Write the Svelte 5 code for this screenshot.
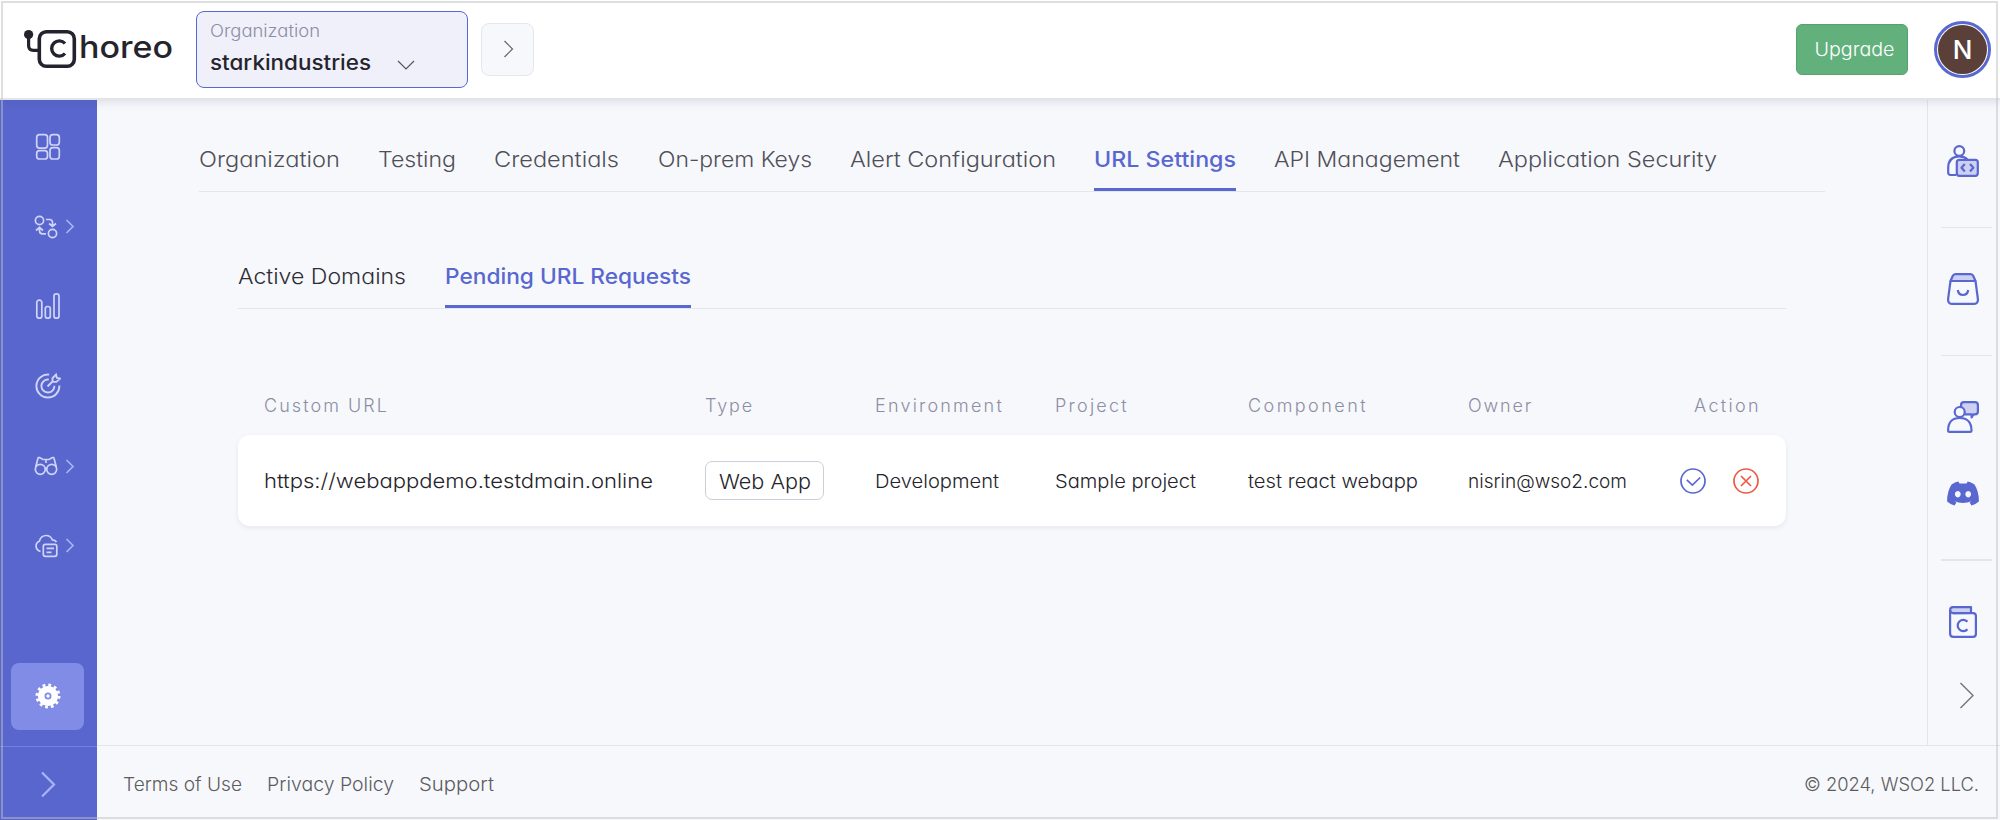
<script>
  // Widens a label's glyphs to its design width and reserves that width in the flow.
  function fit(node, width) {
    const natural = node.getBoundingClientRect().width;
    node.style.width = width + 'px';
    node.style.transform = `scaleX(${width / natural})`;
  }

  // Sets the tracking of a label so that it occupies its design width.
  function track(node, width) {
    const natural = node.getBoundingClientRect().width;
    node.style.letterSpacing = (width - natural) / node.textContent.length + 'px';
  }

  const tabs = [
    ['Organization', 141],
    ['Testing', 78],
    ['Credentials', 125],
    ['On-prem Keys', 154],
    ['Alert Configuration', 206],
    ['URL Settings', 142],
    ['API Management', 186],
    ['Application Security', 219]
  ];
  const subTabs = [
    ['Active Domains', 168],
    ['Pending URL Requests', 246]
  ];
  const headers = [
    ['Custom URL', 125],
    ['Type', 49],
    ['Environment', 129],
    ['Project', 74],
    ['Component', 120],
    ['Owner', 65],
    ['Action', 67]
  ];
  const links = [
    ['Terms of Use', 119],
    ['Privacy Policy', 127],
    ['Support', 75]
  ];
</script>

<div class="app">
  <header>
    <svg class="mark" width="54" height="42" viewBox="0 0 54 42" fill="none" stroke="#24222c">
      <circle cx="4.600" cy="6.500" r="4.600" fill="#24222c" stroke="none" />
      <path d="M4.600 8v9.500q0 4.800 4.800 4.800H15" stroke-width="3.200" />
      <rect x="15.300" y="3.700" width="35" height="34.500" rx="7" stroke-width="3.600" />
      <path d="M41 15.500A7.600 7.600 0 1 0 41 25.500" stroke-width="3.400" />
    </svg>
    <span class="word"><span use:fit={94}>horeo</span></span>
    <div class="org">
      <div class="label"><span use:fit={110}>Organization</span></div>
      <div class="value">
        <span use:fit={161}>starkindustries</span>
        <svg width="18" height="11" viewBox="0 0 18 11"><path d="M1 1l8 8 8-8" fill="none" stroke="#555560" stroke-width="1.200" /></svg>
      </div>
    </div>
    <button class="next" aria-label="Next">
      <svg width="11" height="18" viewBox="0 0 11 18"><path d="M1.500 1l8 8-8 8" fill="none" stroke="#62626c" stroke-width="1.200" /></svg>
    </button>
    <button class="upgrade"><span use:fit={80}>Upgrade</span></button>
    <div class="avatar"><div>N</div></div>
  </header>

  {#snippet chev()}
    <svg class="chev" width="10" height="15" viewBox="0 0 10 15"><path d="M1.500 1l6.500 6.500L1.500 14" fill="none" stroke="#a9b3f5" stroke-width="1.700" /></svg>
  {/snippet}

  <div class="body">
    <nav>
      <div class="item">
        <svg width="26" height="28" viewBox="0 0 26 28">
          <rect x="1.700" y="1.700" width="10.800" height="13.400" rx="2.800" />
          <rect x="15" y="1.700" width="9.300" height="10.300" rx="2.800" />
          <rect x="1.700" y="17.700" width="10.800" height="8.300" rx="2.800" />
          <rect x="15" y="14.700" width="9.300" height="11.300" rx="2.800" />
        </svg>
      </div>
      <div class="item more">
        <svg width="24" height="24" viewBox="0 0 24 24">
          <circle cx="5.500" cy="5.500" r="4.100" />
          <circle cx="18.500" cy="18.500" r="4.100" />
          <path d="M12 4.500h3.500q3 0 3 3V11M15 8.500l3.500 3 3.500-3M12 18.800H8.500q-3 0-3-3V13M2 15.500l3.500-3.200 3.500 3.200" />
        </svg>
        {@render chev()}
      </div>
      <div class="item">
        <svg width="26" height="28" viewBox="0 0 26 28">
          <rect x="1.800" y="8.200" width="5" height="18" rx="2.300" />
          <rect x="10.300" y="14.500" width="5" height="11.700" rx="2.300" />
          <rect x="19" y="1.900" width="5" height="24.300" rx="2.300" />
        </svg>
      </div>
      <div class="item">
        <svg width="26" height="26" viewBox="0 0 26 26" style:stroke-width="1.900">
          <path d="M14.200 1.600A11.500 11.500 0 1 0 24.400 12.500M13.800 6.600A6.500 6.500 0 1 0 19.400 12.800M12.500 13.500l6-6M17.500 8.500V5.200L21 1.600l.800 3.200 3.300.8-3.700 3.300h-3.300z" />
        </svg>
      </div>
      <div class="item more">
        <svg width="24" height="20" viewBox="0 0 24 20">
          <circle cx="6.300" cy="13.300" r="5" />
          <circle cx="17.700" cy="13.300" r="5" />
          <path d="M1.700 11L4 2.300Q4.300 1.200 5.500 1.600L9 3.500h6l3.500-1.900Q19.700 1.200 20 2.300L22.300 11M12 3.500V7M11 13q1-1.400 2 0" />
        </svg>
        {@render chev()}
      </div>
      <div class="item more">
        <svg width="24" height="24" viewBox="0 0 24 24">
          <path d="M6.500 17.300A5.300 5.300 0 0 1 5.300 7.200Q7 1.500 12.300 1.500q4.200 0 6 4.300 3 .200 4.200 2.200" />
          <rect x="9.300" y="10.300" width="13.500" height="12" rx="2" />
          <path d="M12.500 14.300h7.500M12.500 18.300h5" />
        </svg>
        {@render chev()}
      </div>
      <div class="settings">
        <svg width="26" height="26" viewBox="0 0 26 26">
          <circle cx="13" cy="13" r="11" fill="none" stroke="#fff" stroke-width="3" stroke-dasharray="2.760 3" />
          <circle cx="13" cy="13" r="6.800" fill="none" stroke="#fff" stroke-width="6.600" />
          <circle cx="13" cy="13" r="1.700" fill="#fff" stroke="none" />
        </svg>
      </div>
      <div class="expand">
        <svg width="16" height="27" viewBox="0 0 16 27"><path d="M2 1.500l12 12-12 12" fill="none" stroke="#a9b3f5" stroke-width="2.200" /></svg>
      </div>
    </nav>

    <div class="content">
      <div class="upper">
        <main>
          <div class="tabs">
            {#each tabs as [name, w]}
              <div class="tab" class:active={name === 'URL Settings'}><span use:fit={w}>{name}</span></div>
            {/each}
          </div>
          <div class="tabs sub">
            {#each subTabs as [name, w]}
              <div class="tab" class:active={name === 'Pending URL Requests'}><span use:fit={w}>{name}</span></div>
            {/each}
          </div>
          <div class="grid head">
            {#each headers as [name, w]}
              <div><span use:track={w}>{name}</span></div>
            {/each}
          </div>
          <div class="grid row">
            <div class="url"><span use:fit={389}>https://webappdemo.testdmain.online</span></div>
            <div><div class="chip"><span use:fit={92}>Web App</span></div></div>
            <div><span use:fit={124}>Development</span></div>
            <div><span use:fit={141}>Sample project</span></div>
            <div><span use:fit={170}>test react webapp</span></div>
            <div><span use:fit={159}>nisrin@wso2.com</span></div>
            <div class="actions">
              <svg width="26" height="26" viewBox="0 0 26 26" fill="none" stroke="#5967d0" stroke-width="1.700">
                <circle cx="13" cy="13" r="12" /><path d="M6.800 11.800l5.600 5.200 7.800-7.500" />
              </svg>
              <svg width="26" height="26" viewBox="0 0 26 26" fill="none" stroke="#ee5a42" stroke-width="1.700">
                <circle cx="13" cy="13" r="12" /><path d="M8 8l10 10M18 8L8 18" />
              </svg>
            </div>
          </div>
        </main>

        <aside>
          <div class="cell c1">
            <svg width="32" height="32" viewBox="0 0 32 32">
              <circle cx="12.300" cy="6" r="4.900" />
              <path d="M9 30H3.500Q1.200 30 1.200 27.500V23Q1.200 11.500 12.300 11.300q4.700 0 8 3" />
              <rect class="tint" x="9.800" y="14.800" width="21" height="16" rx="2.500" />
              <path d="M17.800 19l-3.300 3.700 3.300 3.700M23 19l3.300 3.700-3.300 3.700" />
            </svg>
          </div>
          <div class="cell c2">
            <svg width="32" height="32" viewBox="0 0 32 32">
              <path class="tint" d="M3.500 8L5.700 3q.8-1.900 2.800-1.900h15q2 0 2.800 1.900L28.500 8z" />
              <path d="M3.500 8L1.100 26Q.8 30.900 5.500 30.900h21q4.700 0 4.400-4.900L28.500 8M10.800 17q.700 5 5.200 5t5.200-5" />
            </svg>
          </div>
          <div class="cell c3">
            <svg width="32" height="32" viewBox="0 0 32 32">
              <path class="tint" d="M14 5V4q0-2.900 3-2.900h11q2.900 0 2.900 2.900v6.500q0 2.900-2.900 2.900h-1.500l-1.900 3V13.400H18z" />
              <circle cx="12.700" cy="11" r="5" fill="#f7f8fc" />
              <path d="M1.100 29.500Q1.100 17 12.700 17T24.500 29.500q0 1.400-1.500 1.400H2.600q-1.500 0-1.500-1.400z" />
            </svg>
          </div>
          <div class="cell c4">
            <svg width="32" height="25" viewBox="0 0 32 25">
              <path style:fill="#5967d0" style:stroke="none" fill-rule="evenodd" d="M4.500 3.500Q8 1.200 11.300.6L12.500 2.500h7L20.700.6Q24 1.200 27.500 3.500 32 10.500 31.900 20.500 28.500 23.500 24.500 24.500L22.600 21.500l2-1.200Q16 23.500 7.400 20.300l2 1.200L7.500 24.500Q3.500 23.500.1 20.500 0 10.500 4.500 3.500zM10.800 10a2.900 3.200 0 1 0 .01 0zM21.200 10a2.900 3.200 0 1 0 .01 0z" />
            </svg>
          </div>
          <div class="cell c5">
            <svg width="28" height="32" viewBox="0 0 28 32">
              <path class="tint" d="M22 7V1.100H4Q1.100 1.100 1.100 4T4 7.200z" />
              <path d="M1.100 4V27.500q0 3.400 3.400 3.400H24q2.900 0 2.900-2.900V10q0-2.800-2.900-2.800H4M18.500 15.800A5.600 5.600 0 1 0 18.500 23.200" />
            </svg>
          </div>
          <svg class="out" width="16" height="27" viewBox="0 0 16 27"><path d="M1.500 1l12.500 12.500L1.500 26" style:stroke="#77777b" style:stroke-width="1.500" /></svg>
        </aside>
      </div>

      <footer>
        {#each links as [name, w]}
          <span class="link"><span use:fit={w}>{name}</span></span>
        {/each}
        <span class="copy"><span use:fit={175}>© 2024, WSO2 LLC.</span></span>
      </footer>
    </div>
  </div>
  <div class="frame"></div>
</div>

<style>
  :global(body) { margin: 0; }
  .app { position: relative; width: 2000px; height: 820px; overflow: hidden; background: #f7f8fc; font-family: Inter, "Liberation Sans", sans-serif; font-feature-settings: "cv11"; color: #25242b; display: flex; flex-direction: column; }
  .app :global(*) { box-sizing: border-box; }
  span { white-space: nowrap; display: inline-block; transform-origin: 0 50%; }
  svg { display: block; flex: none; }
  button { padding: 0; font: inherit; font-feature-settings: inherit; display: flex; align-items: center; justify-content: center; }
  header { height: 100px; flex: none; background: #fff; border-bottom: 2px solid #e3e4e9; box-shadow: 0 2px 8px rgba(60, 65, 90, .14); display: flex; align-items: center; padding: 0 9px 0 24px; position: relative; z-index: 2; }
  .mark { margin-top: -1px; }
  .word { font-size: 31px; font-weight: 500; line-height: 40px; margin: -5px 0 0 1px; width: 117px; }
  .org { width: 272px; height: 77px; background: #f0f0fb; border: 1px solid #5967d0; border-radius: 8px; padding: 7px 0 0 13px; margin-top: 1px; }
  .label { font-size: 17px; font-weight: 300; line-height: 25px; color: #8d8ea3; }
  .value { font-size: 20.500px; font-weight: 500; line-height: 26px; margin-top: 6px; display: flex; align-items: center; gap: 26px; }
  .value svg { margin-top: 5px; }
  .next { width: 53px; height: 53px; margin-left: 13px; border: 1px solid #e6e7ee; border-radius: 8px; background: #f7f8fc; }
  .next svg { margin-left: 2px; }
  .upgrade { margin-left: auto; width: 112px; height: 51px; border: 1px solid #55a270; border-radius: 6px; background: #62b17d; color: #fff; font-size: 18.500px; font-weight: 300; }
  .avatar { width: 57px; height: 57px; border: 3px solid #5967d0; border-radius: 50%; margin-left: 26px; display: flex; align-items: center; justify-content: center; }
  .avatar div { width: 49px; height: 49px; border-radius: 50%; background: #5a4038; color: #fff; font-size: 26px; line-height: 49px; font-weight: 500; text-align: center; }

  .body { flex: 1; display: flex; min-height: 0; }
  nav { width: 97px; background: #5966cd; display: flex; flex-direction: column; }
  .item { height: 79.800px; display: flex; align-items: center; padding-left: 35px; }
  .item:first-child { margin-top: 7px; }
  .item.more { padding-left: 34px; }
  .item > svg { fill: none; stroke: #d0d4f7; stroke-width: 1.700; }
  .chev { margin-left: 7px; }
  .settings { margin: 77.200px 0 0 11px; width: 73px; height: 67px; border-radius: 8px; background: #808ce5; display: flex; align-items: center; justify-content: center; }
  .expand { margin-top: 16px; flex: 1; border-top: 1px solid #7280dd; display: flex; align-items: center; padding: 2px 0 0 40px; }

  .content { flex: 1; display: flex; flex-direction: column; }
  .upper { flex: 1; display: flex; }
  main { width: 1830px; padding-left: 102px; }
  .tabs { display: flex; gap: 38.200px; width: 1626px; height: 92px; border-bottom: 1px solid #e5e6eb; font-size: 21.500px; font-weight: 300; color: #4f4f58; }
  .tab { padding-top: 45px; line-height: 28px; height: 91px; border-bottom: 3px solid transparent; }
  .tab.active { color: #5967d0; font-weight: 500; border-color: #5967d0; }
  .sub { width: 1548px; margin: 25px 0 0 39px; gap: 39px; color: #2f2e36; }
  .grid { display: grid; grid-template-columns: 441px 170px 180px 193px 220px 211px auto; margin-left: 39px; width: 1548px; padding: 0 26px; align-items: center; font-size: 18px; }
  .head { height: 45px; margin-top: 74px; padding-bottom: 1px; color: #8d8ea3; font-weight: 300; }
  .head > div:last-child { padding-left: 15px; }
  .row { height: 91px; margin-top: 7px; border-radius: 12px; background: #fff; box-shadow: 0 2px 5px rgba(70, 75, 110, .09); font-weight: 300; font-size: 18.500px; }
  .url { font-size: 20px; }
  .chip { width: 119px; height: 39px; padding-top: 2px; border: 1px solid #ceced9; border-radius: 7px; font-size: 20.500px; display: flex; align-items: center; justify-content: center; }
  .actions { display: flex; gap: 27px; padding-left: 1px; }

  aside { flex: 1; border-left: 1px solid #e3e5ea; padding: 0 8px 0 13px; display: flex; flex-direction: column; }
  aside svg { fill: none; stroke: #5967d0; stroke-width: 2.200; stroke-linejoin: round; }
  .tint { fill: #cdd0f1; }
  .cell { border-bottom: 1px solid #e3e5ea; padding-left: 6px; flex: none; }
  .c1 { height: 128px; padding-top: 45px; }
  .c2 { height: 128px; padding-top: 45px; }
  .c3 { height: 78px; padding-top: 45px; border: 0; }
  .c4 { height: 127px; padding-top: 47px; border-bottom-width: 2px; }
  .c5 { height: 80px; padding: 45px 0 0 8px; border: 0; }
  .out { margin: 41px 0 0 18px; }

  footer { height: 75px; flex: none; border-top: 1px solid #e3e5ea; display: flex; align-items: center; gap: 25px; padding: 1px 21px 0 26px; color: #5c5c60; font-size: 18.500px; font-weight: 300; }
  .copy { margin-left: auto; }
  .frame { position: absolute; z-index: 3; left: 1px; top: 1px; width: 1997px; height: 818px; border: 2px solid rgba(190, 192, 192, .5); pointer-events: none; }
</style>
